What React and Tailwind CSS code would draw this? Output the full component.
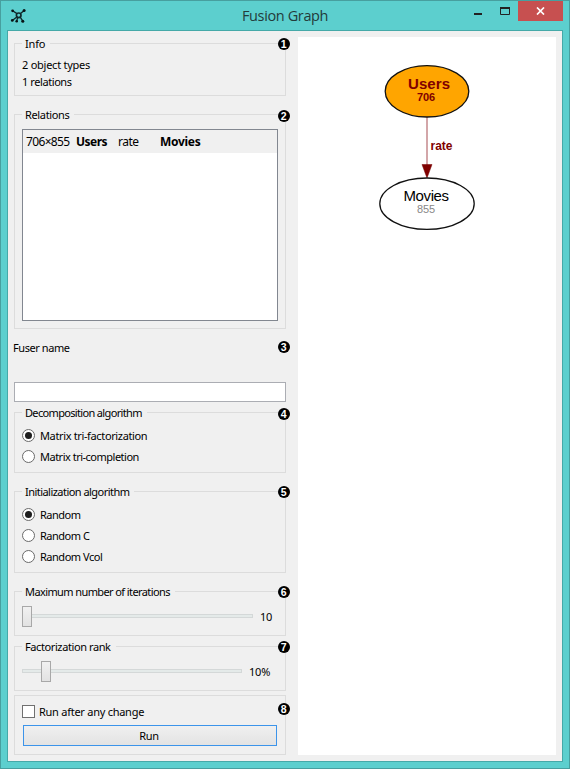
import React from "react";

function Badge({ n, className }) {
  return (
    <span
      className={`absolute z-10 flex h-[12.5px] w-[12.5px] items-center justify-center rounded-full bg-black font-['Liberation_Sans',Arial,sans-serif] text-[10.5px] font-bold leading-[12.5px] text-white ${className}`}
    >
      {n}
    </span>
  );
}

function Group({ title, titleClass = "", n, badgeClass = "top-[-6.5px]", className, children }) {
  return (
    <section className={`relative border border-[#dcdcdc] ${className}`}>
      {title && (
        <h2 className={`absolute left-[7px] top-[-9px] whitespace-nowrap bg-[#f0f0f0] pl-[3px] pr-[5px] leading-[17px] ${titleClass}`}>
          {title}
        </h2>
      )}
      <Badge n={n} className={`right-[-5px] ${badgeClass}`} />
      {children}
    </section>
  );
}

function Radio({ label, checked, className = "" }) {
  return (
    <label className="flex h-[21px] items-center">
      <span className="flex h-[13px] w-[13px] items-center justify-center rounded-full border border-[#6a6a6a] bg-white">
        {checked && <span className="h-[7px] w-[7px] rounded-full bg-[#1e1e1e]" />}
      </span>
      <span className={`ml-[5px] whitespace-nowrap ${className}`}>{label}</span>
    </label>
  );
}

function Slider({ trackClass, handleClass, value }) {
  return (
    <div className="flex h-[21px] items-center pl-[7px]">
      <div className={`relative h-[4px] border border-[#d4d8d8] bg-[#e4eae9] ${trackClass}`}>
        <span
          className={`absolute top-[-9px] h-[21px] w-[10px] border border-[#a8a8a8] bg-linear-to-b from-[#f1f1f1] to-[#e2e2e2] ${handleClass}`}
        />
      </div>
      <span className="ml-[7px] pt-px tracking-[-0.2px]">{value}</span>
    </div>
  );
}

function AppIcon() {
  return (
    <svg width="16" height="16" viewBox="0 0 16 16" className="mt-[7px] ml-[9px]">
      <g stroke="#10282a" strokeWidth="1.3" fill="none">
        <circle cx="8.7" cy="7.3" r="2.3" strokeWidth="1.7" />
        <path d="M2.6 2.7 7 5.6M14.2 2.4 10.5 5.6M2.3 12.5 6.8 9M7.6 9.6 6.7 13.2M10.2 9.2 12.8 13.2" />
      </g>
      <g fill="#081416">
        <circle cx="2.6" cy="2.8" r="1.4" />
        <circle cx="14.1" cy="2.5" r="1.5" />
        <circle cx="2.3" cy="12.4" r="1.4" />
        <circle cx="6.7" cy="13.3" r="1.3" />
        <circle cx="12.8" cy="13.3" r="1.5" />
      </g>
    </svg>
  );
}

function TitleBar() {
  return (
    <header className="relative flex h-[29px] justify-between">
      <AppIcon />
      <h1 className="absolute left-[241px] top-[4px] whitespace-nowrap font-['Open_Sans',sans-serif] text-[14.5px] leading-[21px] tracking-[-0.38px] text-[#233b3b]">
        Fusion Graph
      </h1>
      <div className="flex">
        <svg width="45" height="20">
          <rect x="1" y="12" width="8" height="2" fill="#222" />
          <path d="M27.500 7V13.500H36.500V7" fill="none" stroke="#222" />
          <rect x="27" y="6" width="10" height="2" fill="#222" />
        </svg>
        <div className="mr-[6px] flex h-[20px] w-[45px] items-center justify-center bg-[#c75050]">
          <svg width="9" height="8" viewBox="0 0 9 8">
            <path d="M1 .5 8 7.5M8 .5 1 7.5" stroke="#fff" strokeWidth="1.7" />
          </svg>
        </div>
      </div>
    </header>
  );
}

function Graph() {
  return (
    <svg
      width="258"
      height="718"
      viewBox="298 37 258 718"
      className="ml-[12px] mt-[6px] shrink-0 bg-white font-['Liberation_Sans',Arial,sans-serif]"
    >
      <path d="M427 117v49" stroke="#d3a6a9" strokeWidth="2" />
      <path d="M422 164.500h10L427 178z" fill="#800000" stroke="#700" strokeWidth=".5" />
      <ellipse cx="427" cy="91.300" rx="41.800" ry="25.700" fill="#ffa500" stroke="#111" strokeWidth="1.300" />
      <ellipse cx="427" cy="203.700" rx="47.200" ry="25.700" fill="#fff" stroke="#111" strokeWidth="1.300" />
      <text x="408" y="89" textLength="42" fontSize="15" fontWeight="700" fill="#800000">Users</text>
      <text x="417" y="101" textLength="18" fontSize="11" fontWeight="700" fill="#800000">706</text>
      <text x="430.500" y="150" textLength="22" fontSize="12" fontWeight="700" fill="#800000">rate</text>
      <text x="403.500" y="201" textLength="45.500" fontSize="15" fill="#000">Movies</text>
      <text x="417" y="213" textLength="18" fontSize="11" fill="#888">855</text>
    </svg>
  );
}

export default function App() {
  return (
    <main className="h-[769px] w-[570px] overflow-hidden border border-[#479f9f] bg-[#5ccfce] font-['Noto_Sans',sans-serif] text-[11px] leading-[17px] text-black">
      <TitleBar />
      <div className="ml-[6px] flex h-[732px] w-[556px] border border-[#45a9a8] bg-[#f0f0f0]">
        <div className="ml-[6px] flex w-[272px] shrink-0 flex-col pt-[12px]">
          <Group title="Info" titleClass="tracking-[-0.2px]" n={1} className="h-[53px] pl-[7px] pt-[12px]">
            <p className="tracking-[-0.25px]">2 object types</p>
            <p className="tracking-[-0.42px]">1 relations</p>
          </Group>

          <Group
            title="Relations"
            titleClass="tracking-[-0.35px]"
            n={2}
            className="mt-[18px] h-[215px] pl-[7px] pt-[14px]"
            badgeClass="top-[-5.5px]"
          >
            <div className="h-[192px] w-[256px] border border-[#828790] bg-white">
              <div className="flex h-[23px] items-center bg-[#f0f0f0] pl-[3px] text-[12px]">
                <span className="w-[50px] whitespace-nowrap tracking-[-0.65px]">706×855</span>
                <b className="w-[42px] tracking-[-0.5px]">Users</b>
                <span className="w-[42px] tracking-[-0.5px]">rate</span>
                <b className="tracking-[-0.3px]">Movies</b>
              </div>
            </div>
          </Group>

          <div className="relative flex h-[73px] flex-col justify-between pt-[10px]">
            <span className="ml-[-1px] tracking-[-0.42px]">Fuser name</span>
            <Badge n={3} className="right-[-4px] top-[11.5px]" />
            <div className="h-[20px] border border-[#abadb3] bg-white" />
          </div>

          <Group
            title="Decomposition algorithm"
            titleClass="tracking-[-0.66px]"
            n={4}
            className="mt-[10px] h-[61px] pl-[7px] pt-[12px]"
            badgeClass="top-[-5.5px]"
          >
            <Radio label="Matrix tri-factorization" className="tracking-[-0.36px]" checked />
            <Radio label="Matrix tri-completion" className="tracking-[-0.5px]" />
          </Group>

          <Group
            title="Initialization algorithm"
            titleClass="tracking-[-0.54px]"
            n={5}
            className="mt-[18px] h-[82px] pl-[7px] pt-[12px]"
          >
            <Radio label="Random" className="tracking-[-0.5px]" checked />
            <Radio label="Random C" className="tracking-[-0.5px]" />
            <Radio label="Random Vcol" className="tracking-[-0.48px]" />
          </Group>

          <Group
            title="Maximum number of iterations"
            titleClass="tracking-[-0.6px]"
            n={6}
            className="mt-[18px] h-[45px] pt-[13px]"
          >
            <Slider trackClass="w-[231px]" handleClass="left-[-1px]" value="10" />
          </Group>

          <Group
            title="Factorization rank"
            titleClass="tracking-[-0.4px]"
            n={7}
            className="mt-[10px] h-[45px] pt-[13px]"
          >
            <Slider trackClass="w-[220px]" handleClass="left-[18px]" value="10%" />
          </Group>

          <Group n={8} className="mt-[4px] h-[60px] pl-[7px] pt-[9px]" badgeClass="top-[6.5px]">
            <label className="flex h-[13px] items-center">
              <span className="h-[13px] w-[13px] border border-[#707070] bg-white" />
              <span className="ml-[4px] tracking-[-0.26px]">Run after any change</span>
            </label>
            <button className="ml-px mt-[7px] flex h-[21px] w-[254px] items-center justify-center border border-[#3c94ea] bg-linear-to-b from-[#f0f0f0] to-[#e3e3e3] pr-[2px] tracking-[-0.3px]">
              Run
            </button>
          </Group>
        </div>
        <Graph />
      </div>
    </main>
  );
}
